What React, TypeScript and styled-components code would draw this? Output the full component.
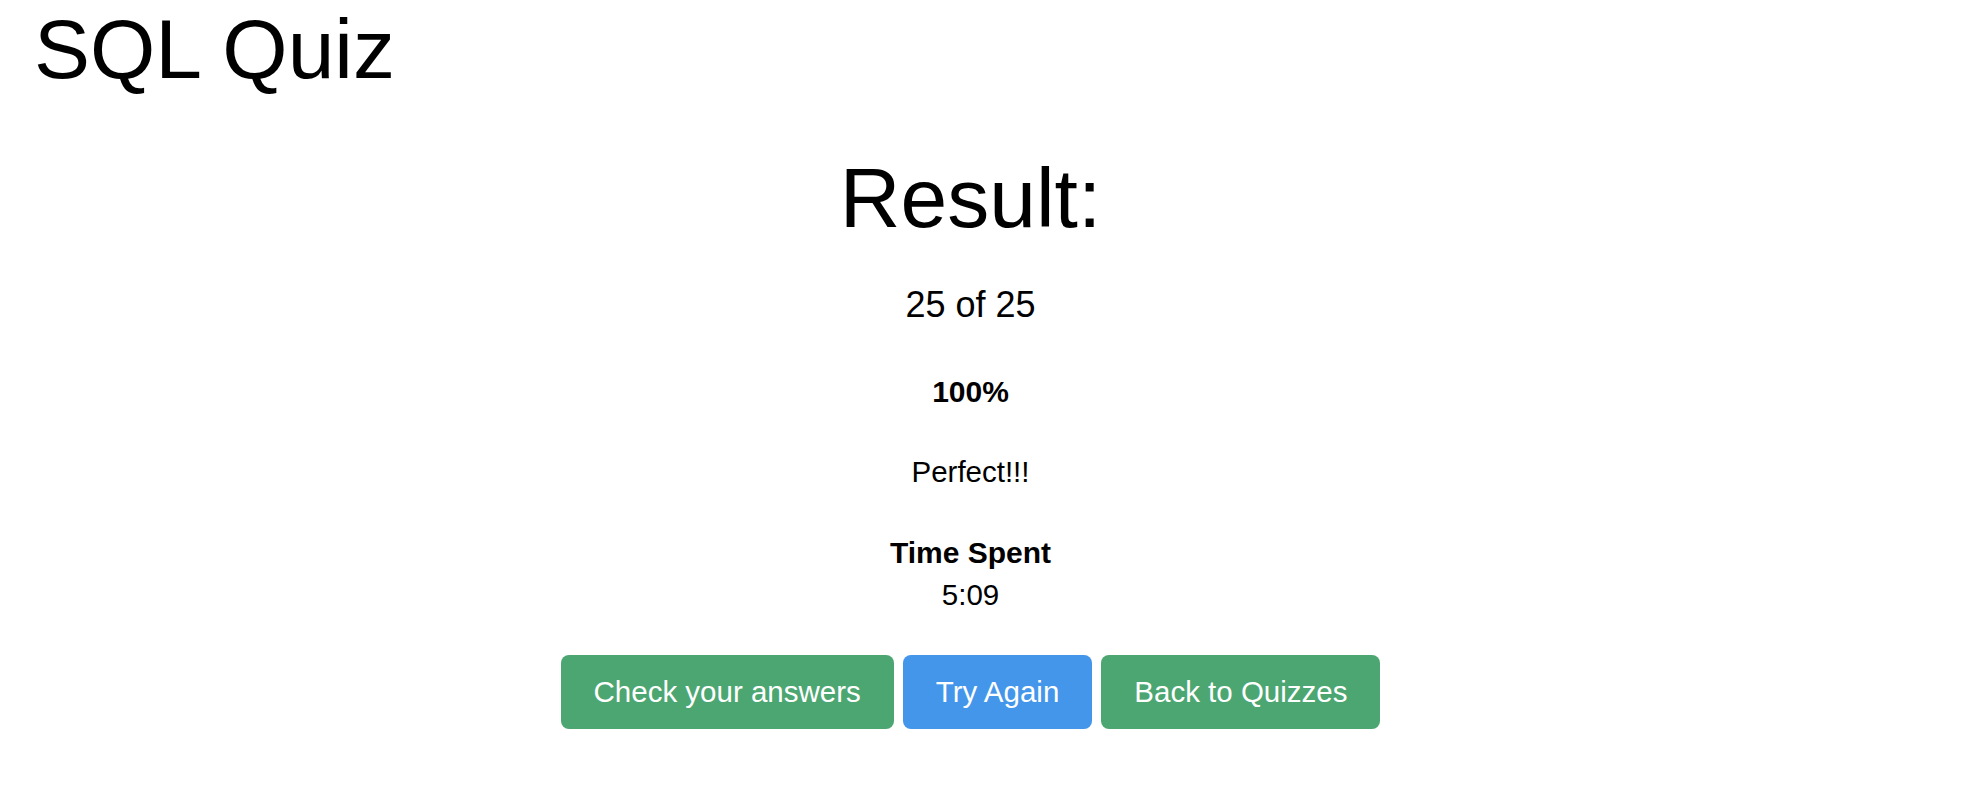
import React from "react";
import styled, { createGlobalStyle } from "styled-components";

const GlobalStyle = createGlobalStyle`
  html, body {
    margin: 0;
    padding: 0;
    background: #ffffff;
    color: #000000;
    font-family: "Liberation Sans", Arial, Helvetica, sans-serif;
  }
`;

const Page = styled.div`
  display: flex;
  flex-direction: column;
  padding-top: 1px;
`;

const Title = styled.h1`
  margin: 0;
  padding-left: 34px;
  font-size: 84px;
  font-weight: 400;
  line-height: 96px;
`;

const Result = styled.main`
  display: flex;
  flex-direction: column;
  align-items: center;
  margin-right: 27px;
  padding-top: 53px;
`;

const Heading = styled.h2`
  margin: 0;
  font-size: 84px;
  font-weight: 400;
  line-height: 96px;
`;

const Score = styled.p`
  margin: 39px 0 0;
  font-size: 36px;
  line-height: 40px;
`;

const Line = styled.p<{ $bold?: boolean; $gap: number }>`
  margin: ${(p) => p.$gap}px 0 0;
  font-size: ${(p) => (p.$bold ? 30 : 29.5)}px;
  line-height: 42px;
  font-weight: ${(p) => (p.$bold ? 700 : 400)};
`;

const Actions = styled.div`
  display: flex;
  gap: 9px;
  margin-top: 39px;
`;

const Button = styled.button<{ $variant: "green" | "blue" }>`
  border: none;
  border-radius: 8px;
  height: 74px;
  padding: 0 33px;
  font-family: "Liberation Sans", Arial, Helvetica, sans-serif;
  font-size: 29.5px;
  color: #ffffff;
  cursor: pointer;
  background: ${(p) => (p.$variant === "green" ? "#4ca672" : "#4496ea")};
`;

export default function App() {
  return (
    <Page>
      <GlobalStyle />
      <Title>SQL Quiz</Title>
      <Result>
        <Heading>Result:</Heading>
        <Score>25 of 25</Score>
        <Line $bold $gap={46}>100%</Line>
        <Line $gap={38}>Perfect!!!</Line>
        <Line $bold $gap={39}>Time Spent</Line>
        <Line $gap={0}>5:09</Line>
        <Actions>
          <Button $variant="green">Check your answers</Button>
          <Button $variant="blue">Try Again</Button>
          <Button $variant="green">Back to Quizzes</Button>
        </Actions>
      </Result>
    </Page>
  );
}
